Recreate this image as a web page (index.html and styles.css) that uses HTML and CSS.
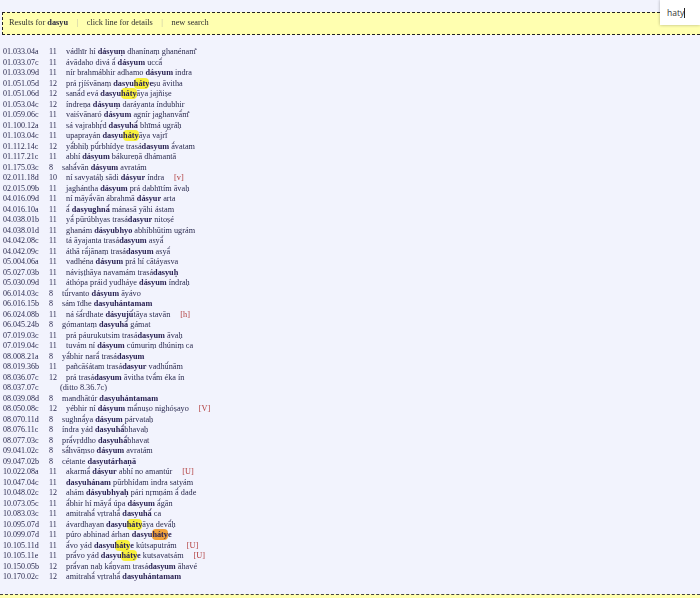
FILE: index.html
```html
<!DOCTYPE html>
<html lang="sa">
<head>
<meta charset="utf-8">
<title>Results for dasyu</title>
<link rel="stylesheet" href="styles.css">
</head>
<body>
<div class="page">
<div class="bar">
  <span>Results for <b>dasyu</b></span><span class="sep">|</span><span>click line for details</span><span class="sep">|</span><span>new search</span>
</div>
<div class="results">
<div class="row"><span class="ref">01.033.04a</span><span class="num">11</span><span class="txt">vádhīr hí <b>dásyuṃ</b> dhanínaṃ ghanénam̐</span></div>
<div class="row"><span class="ref">01.033.07c</span><span class="num">11</span><span class="txt">ávādaho divá ā́ <b>dásyum</b> uccā́</span></div>
<div class="row"><span class="ref">01.033.09d</span><span class="num">11</span><span class="txt">nír brahmábhir adhamo <b>dásyum</b> indra</span></div>
<div class="row"><span class="ref">01.051.05d</span><span class="num">12</span><span class="txt">prá ṛjíśvānaṃ <b>dasyu<mark>háty</mark>e</b>ṣu āvitha</span></div>
<div class="row"><span class="ref">01.051.06d</span><span class="num">12</span><span class="txt">sanā́d evá <b>dasyu<mark>háty</mark></b>āya jajñiṣe</span></div>
<div class="row"><span class="ref">01.053.04c</span><span class="num">12</span><span class="txt">índreṇa <b>dásyuṃ</b> daráyanta índubhir</span></div>
<div class="row"><span class="ref">01.059.06c</span><span class="num">11</span><span class="txt">vaiśvānaró <b>dásyum</b> agnír jaghanvā́m̐</span></div>
<div class="row"><span class="ref">01.100.12a</span><span class="num">11</span><span class="txt">sá vajrabhṛ́d <b>dasyuhā́</b> bhīmá ugráḥ</span></div>
<div class="row"><span class="ref">01.103.04c</span><span class="num">11</span><span class="txt">upaprayán <b>dasyu<mark>háty</mark></b>āya vajrī́</span></div>
<div class="row"><span class="ref">01.112.14c</span><span class="num">12</span><span class="txt">yā́bhiḥ pū́rbhídye trasá<b>dasyum</b> ā́vatam</span></div>
<div class="row"><span class="ref">01.117.21c</span><span class="num">11</span><span class="txt">abhí <b>dásyum</b> bákureṇā dhámantā</span></div>
<div class="row"><span class="ref">01.175.03c</span><span class="num short">8</span><span class="txt">sahā́vān <b>dásyum</b> avratám</span></div>
<div class="row"><span class="ref">02.011.18d</span><span class="num">10</span><span class="txt">ní savyatáḥ sādi <b>dásyur</b> índra<span class="tag">[v]</span></span></div>
<div class="row"><span class="ref">02.015.09b</span><span class="num">11</span><span class="txt">jaghántha <b>dásyum</b> prá dabhītím āvaḥ</span></div>
<div class="row"><span class="ref">04.016.09d</span><span class="num">11</span><span class="txt">ní māyā́vān ábrahmā <b>dásyur</b> arta</span></div>
<div class="row"><span class="ref">04.016.10a</span><span class="num">11</span><span class="txt">ā́ <b>dasyughnā́</b> mánasā yāhi ástam</span></div>
<div class="row"><span class="ref">04.038.01b</span><span class="num">11</span><span class="txt">yā́ pūrúbhyas trasá<b>dasyur</b> nitoṣé</span></div>
<div class="row"><span class="ref">04.038.01d</span><span class="num">11</span><span class="txt">ghanám <b>dásyubhyo</b> abhíbhūtim ugrám</span></div>
<div class="row"><span class="ref">04.042.08c</span><span class="num">11</span><span class="txt">tá āyajanta trasá<b>dasyum</b> asyā́</span></div>
<div class="row"><span class="ref">04.042.09c</span><span class="num">11</span><span class="txt">áthā rā́jānaṃ trasá<b>dasyum</b> asyā́</span></div>
<div class="row"><span class="ref">05.004.06a</span><span class="num">11</span><span class="txt">vadhéna <b>dásyum</b> prá hí cātáyasva</span></div>
<div class="row"><span class="ref">05.027.03b</span><span class="num">11</span><span class="txt">náviṣṭhāya navamám trasá<b>dasyuḥ</b></span></div>
<div class="row"><span class="ref">05.030.09d</span><span class="num">11</span><span class="txt">áthópa práid yudháye <b>dásyum</b> índraḥ</span></div>
<div class="row"><span class="ref">06.014.03c</span><span class="num short">8</span><span class="txt">tū́rvanto <b>dásyum</b> āyávo</span></div>
<div class="row"><span class="ref">06.016.15b</span><span class="num short">8</span><span class="txt">sám īdhe <b>dasyuhántamam</b></span></div>
<div class="row"><span class="ref">06.024.08b</span><span class="num">11</span><span class="txt">ná śā́rdhate <b>dásyujū́</b>tāya stavān<span class="tag">[h]</span></span></div>
<div class="row"><span class="ref">06.045.24b</span><span class="num short">8</span><span class="txt">gómantaṃ <b>dasyuhā́</b> gámat</span></div>
<div class="row"><span class="ref">07.019.03c</span><span class="num">11</span><span class="txt">prá páurukutsim trasá<b>dasyum</b> āvaḥ</span></div>
<div class="row"><span class="ref">07.019.04c</span><span class="num">11</span><span class="txt">tuvám ní <b>dásyum</b> cúmuriṃ dhúniṃ ca</span></div>
<div class="row"><span class="ref">08.008.21a</span><span class="num short">8</span><span class="txt">yā́bhir narā́ trasá<b>dasyum</b></span></div>
<div class="row"><span class="ref">08.019.36b</span><span class="num">11</span><span class="txt">pañcāśátam trasá<b>dasyur</b> vadhū́nām</span></div>
<div class="row"><span class="ref">08.036.07c</span><span class="num">12</span><span class="txt">prá trasá<b>dasyum</b> āvitha tvā́m éka ín</span></div>
<div class="row"><span class="ref">08.037.07c</span><span class="ditto">(ditto 8.36.7c)</span></div>
<div class="row"><span class="ref">08.039.08d</span><span class="num short">8</span><span class="txt">mandhātúr <b>dasyuhántamam</b></span></div>
<div class="row"><span class="ref">08.050.08c</span><span class="num">12</span><span class="txt">yébhir ní <b>dásyum</b> mā́nuṣo nighóṣayo<span class="tag">[V]</span></span></div>
<div class="row"><span class="ref">08.070.11d</span><span class="num short">8</span><span class="txt">sughnā́ya <b>dásyum</b> párvataḥ</span></div>
<div class="row"><span class="ref">08.076.11c</span><span class="num short">8</span><span class="txt">índra yád <b>dasyuhā́</b>bhavaḥ</span></div>
<div class="row"><span class="ref">08.077.03c</span><span class="num short">8</span><span class="txt">prā́vṛddho <b>dasyuhā́</b>bhavat</span></div>
<div class="row"><span class="ref">09.041.02c</span><span class="num short">8</span><span class="txt">sā́hvāṃso <b>dásyum</b> avratám</span></div>
<div class="row"><span class="ref">09.047.02b</span><span class="num short">8</span><span class="txt">cétante <b>dasyutárhaṇā</b></span></div>
<div class="row"><span class="ref">10.022.08a</span><span class="num">11</span><span class="txt">akarmā́ <b>dásyur</b> abhí no amantúr<span class="tag">[U]</span></span></div>
<div class="row"><span class="ref">10.047.04c</span><span class="num">11</span><span class="txt"><b>dasyuhánam</b> pūrbhídam indra satyám</span></div>
<div class="row"><span class="ref">10.048.02c</span><span class="num">12</span><span class="txt">ahám <b>dásyubhyaḥ</b> pári nṛmṇám ā́ dade</span></div>
<div class="row"><span class="ref">10.073.05c</span><span class="num">11</span><span class="txt">ā́bhir hí māyā́ úpa <b>dásyum</b> ā́gān</span></div>
<div class="row"><span class="ref">10.083.03c</span><span class="num">11</span><span class="txt">amitrahā́ vṛtrahā́ <b>dasyuhā́</b> ca</span></div>
<div class="row"><span class="ref">10.095.07d</span><span class="num">11</span><span class="txt">ávardhayan <b>dasyu<mark>háty</mark></b>āya devā́ḥ</span></div>
<div class="row"><span class="ref">10.099.07d</span><span class="num">11</span><span class="txt">púro abhinad árhan <b>dasyu<mark class="hot">háty</mark>e</b></span></div>
<div class="row"><span class="ref">10.105.11d</span><span class="num">11</span><span class="txt">ā́vo yád <b>dasyu<mark>háty</mark>e</b> kútsaputrám<span class="tag">[U]</span></span></div>
<div class="row"><span class="ref">10.105.11e</span><span class="num">11</span><span class="txt">prā́vo yád <b>dasyu<mark>háty</mark>e</b> kutsavatsám<span class="tag">[U]</span></span></div>
<div class="row"><span class="ref">10.150.05b</span><span class="num">12</span><span class="txt">prā́van naḥ kā́ṇvam trasá<b>dasyum</b> āhavé</span></div>
<div class="row"><span class="ref">10.170.02c</span><span class="num">12</span><span class="txt">amitrahā́ vṛtrahā́ <b>dasyuhántamam</b></span></div>
</div>
<div class="foot"></div>
</div>
<div class="find">haty<span class="caret"></span></div>
</body>
</html>
```
FILE: styles.css
```css
html, body {
  margin: 0;
  height: 598px;
  overflow: hidden;
  background: #f2f3fd;
}
.page {
  height: 598px;
  padding-top: 12px;
  box-sizing: border-box;
  display: flex;
  flex-direction: column;
  font-family: "Liberation Serif", "Noto Sans", serif;
  font-size: 8px;
  line-height: 10.5px;
  color: #2b2b50;
  filter: blur(0.3px);
}
.bar {
  height: 23px;
  margin-left: 2px;
  padding-left: 6px;
  display: flex;
  align-items: center;
  gap: 8.5px;
  flex: none;
  box-sizing: border-box;
  background: #ffffb0;
  border: 1px dashed #222;
  border-right: 0;
  font-size: 8.3px;
  color: #2e2e30;
}
.bar b { color: #2a2a40; }
.sep { color: #b9b9a6; }
.results {
  margin-top: 12px;
  padding-left: 3px;
  flex: none;
}
.row {
  display: flex;
  height: 10.5px;
  white-space: nowrap;
}
.ref { width: 46px; flex: none; }
.num { width: 17px; flex: none; }
.num.short { width: 13px; }
.ditto { margin-left: 11px; font-size: 8.25px; }
.txt { font-size: 8.25px; }
.txt b { color: #2b2454; }
mark {
  background: #f7f03c;
  color: inherit;
  border-radius: 4px;
  padding: 1px 0;
}
mark.hot { background: #f0a23c; }
.tag {
  margin-left: 10px;
  color: #b03a3a;
}
.foot {
  margin-top: auto;
  height: 3px;
  flex: none;
  background: #ffffb0;
  border-top: 1px dashed #444;
}
.find {
  position: absolute;
  top: 0;
  right: 0;
  width: 33px;
  height: 25px;
  padding-left: 7px;
  background: #fff;
  box-shadow: 0 0 3px rgba(0, 0, 0, 0.3);
  display: flex;
  align-items: center;
  font-family: "Open Sans", "Noto Sans", sans-serif;
  font-size: 8.5px;
  color: #333;
}
.caret {
  width: 1px;
  height: 10px;
  background: #222;
}
```
